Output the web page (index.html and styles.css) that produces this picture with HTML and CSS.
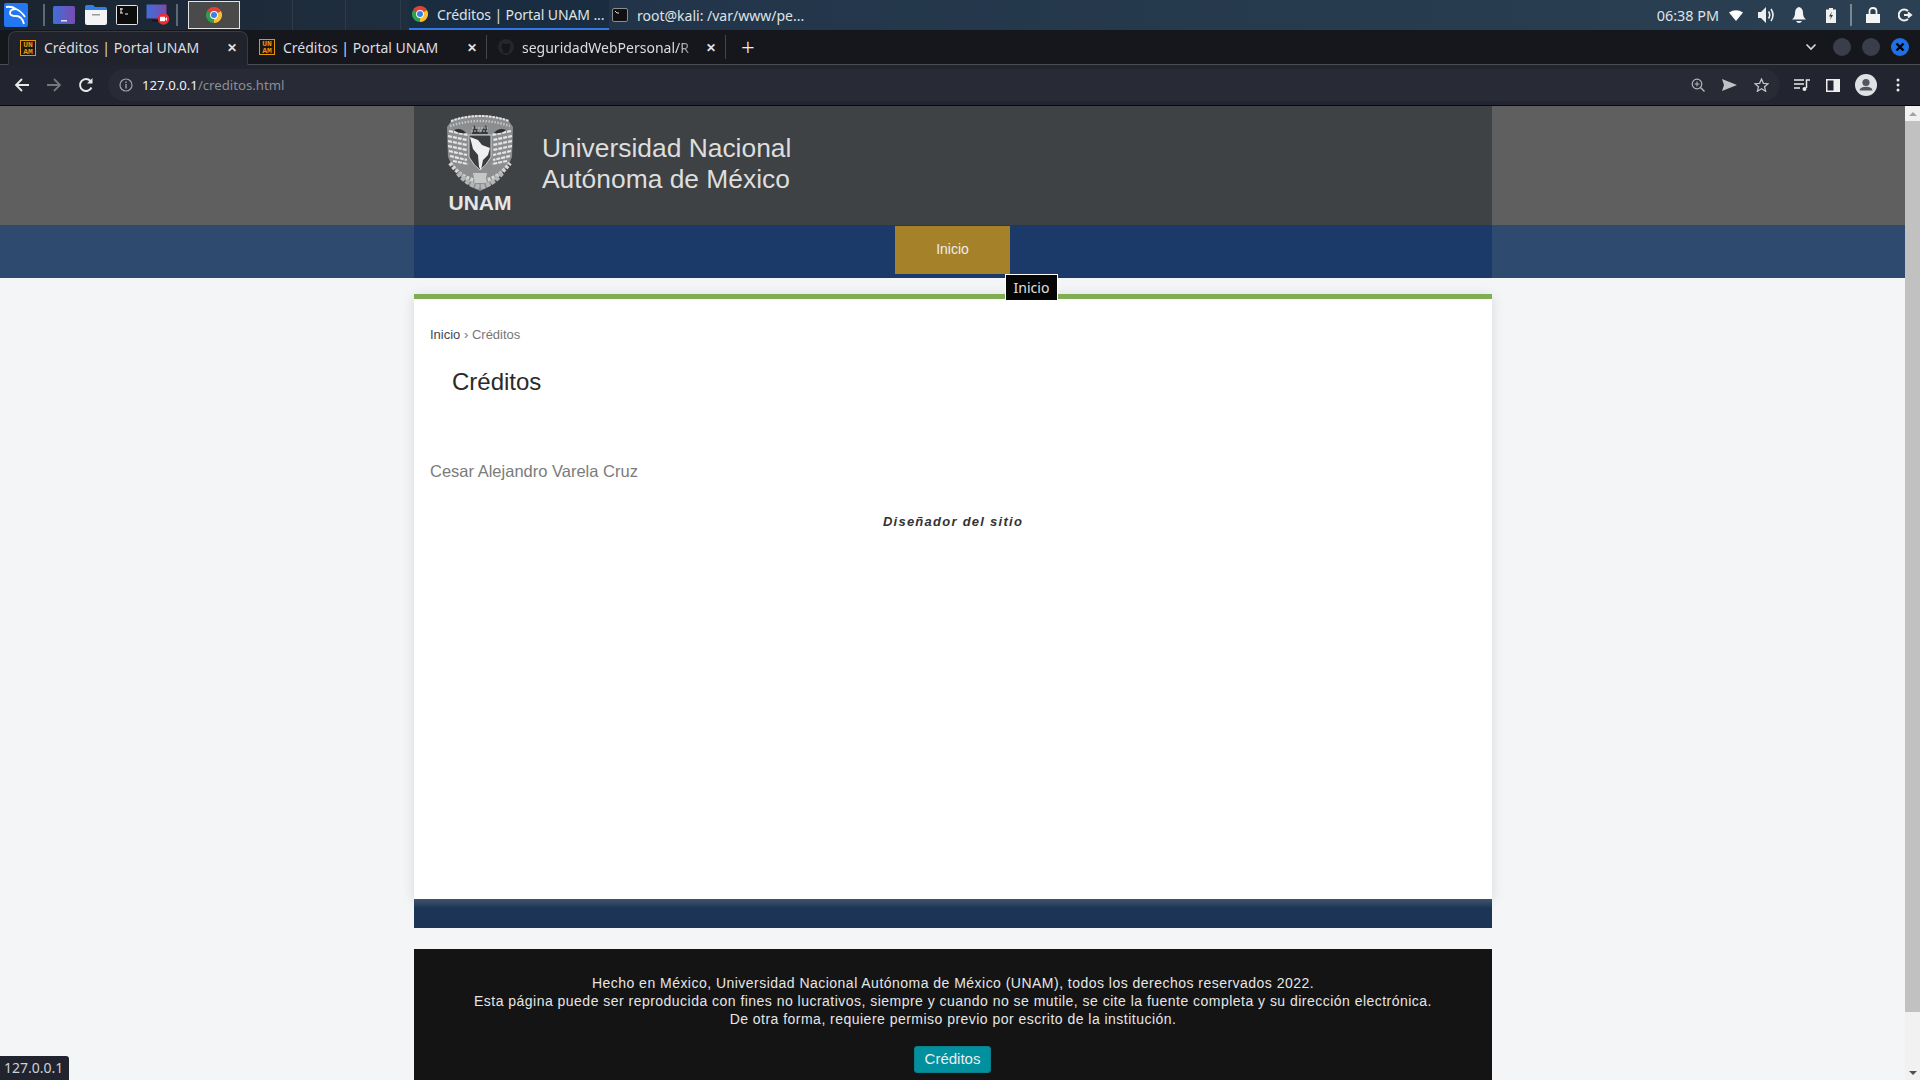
FILE: index.html
```html
<!DOCTYPE html>
<html lang="en">
<head>
  <meta charset="UTF-8">
  <meta name="viewport" content="width=device-width, initial-scale=1.0">
  <title>Créditos | Portal UNAM</title>
  <link rel="stylesheet" href="styles.css">
</head>
<body>
  <svg class="defs" width="0" height="0">
    <symbol id="chrome" viewBox="0 0 16 16">
      <path d="M8 8 L1.07 4 A8 8 0 0 1 14.93 4 Z" fill="#dc4437"/>
      <path d="M8 8 L14.93 4 A8 8 0 0 1 8 16 Z" fill="#fbc02d"/>
      <path d="M8 8 L8 16 A8 8 0 0 1 1.07 4 Z" fill="#2e9e4f"/>
      <circle cx="8" cy="8" r="3.9" fill="#fff"/>
      <circle cx="8" cy="8" r="3" fill="#3b7ee8"/>
    </symbol>
  </svg>

  <!-- Desktop panel -->
  <div class="panel">
    <svg class="kali" width="24" height="24" viewBox="0 0 24 24">
      <rect width="24" height="24" rx="2" fill="#2377f0"/>
      <path d="M2 4 Q8 3 12 6 Q6 6 6 10 Q6 13 12 13 Q18 13 20 21 M12 6 Q17 8 21 14" fill="none" stroke="#fff" stroke-width="1.8"/>
    </svg>
    <span class="panel-sep first"></span>
    <svg class="launcher apps" width="22" height="18" viewBox="0 0 22 18">
      <defs><linearGradient id="desk" x1="0" x2="1"><stop offset="0" stop-color="#3f6fd8"/><stop offset="1" stop-color="#7a4bb0"/></linearGradient></defs>
      <rect width="22" height="18" rx="1.5" fill="url(#desk)"/>
      <rect x="8" y="14" width="6" height="1.5" fill="#dfe6f5"/>
    </svg>
    <svg class="launcher" width="22" height="20" viewBox="0 0 22 20">
      <path d="M0 2 Q0 0 2 0 H8 L10 2 H20 Q22 2 22 4 V6 H0 Z" fill="#2f80e6"/>
      <path d="M0 5 H22 V18 Q22 20 20 20 H2 Q0 20 0 18 Z" fill="#f4f4f4"/>
      <rect x="7" y="9" width="8" height="1.5" fill="#9a9a9a"/>
    </svg>
    <svg class="launcher term" width="22" height="20" viewBox="0 0 22 20">
      <rect x=".5" y=".5" width="21" height="19" rx="1" fill="#0c0c0c" stroke="#e4e4e4"/>
      <path d="M4 4 H7 M5 3 V8 M4 8 H7 M9 9 H12" stroke="#eee" fill="none"/>
    </svg>
    <svg class="launcher rec" width="24" height="22" viewBox="0 0 24 22">
      <rect x="0" y="0" width="21" height="15" fill="url(#desk)" stroke="#23252c"/>
      <rect x="6" y="16" width="9" height="1.5" fill="#11141a"/>
      <circle cx="17.5" cy="15" r="5.8" fill="#ee2a35"/>
      <rect x="14" y="12.8" width="5" height="4.4" fill="#fff"/>
      <path d="M19 15 L21 13 V17 Z" fill="#fff"/>
    </svg>
    <span class="panel-sep second"></span>
    <div class="win-active"><svg width="16" height="16"><use href="#chrome"/></svg></div>
    <span class="win-slot"></span>
    <span class="win-slot"></span>
    <span class="win-slot wide"></span>
    <div class="task task-on">
      <svg width="16" height="16"><use href="#chrome"/></svg>
      <span>Créditos | Portal UNAM ...</span>
    </div>
    <div class="task">
      <svg width="16" height="16" viewBox="0 0 16 16">
        <rect x=".5" y="1.5" width="15" height="13" rx="1.5" fill="#111" stroke="#8a8d92"/>
        <path d="M3 4 L5 6 H7" stroke="#ddd" fill="none"/>
      </svg>
      <span>root@kali: /var/www/pe...</span>
    </div>
    <div class="tray">
      <span class="clock">06:38 PM</span>
      <svg class="tray-wifi" width="14" height="11" viewBox="0 0 14 11"><path d="M0 2.5 Q7 -2 14 2.5 L7 11 Z" fill="#fff"/></svg>
      <svg class="tray-vol" width="18" height="16" viewBox="0 0 18 16"><path d="M0 5 H3 L8 0 V16 L3 11 H0 Z" fill="#eee"/><path d="M10.5 4.5 Q13 8 10.5 11.5 M13 2 Q17 8 13 14" fill="none" stroke="#eee" stroke-width="1.6"/></svg>
      <svg class="tray-bell" width="14" height="16" viewBox="0 0 14 16"><path d="M7 0 Q11 1 11 6 Q11 10 14 12.5 H0 Q3 10 3 6 Q3 1 7 0 Z M4 14 H10 Q9 16 7 16 Q5 16 4 14 Z" fill="#f4f4f4"/></svg>
      <svg class="tray-batt" width="10" height="15" viewBox="0 0 10 15"><path d="M3 0 H7 V1.5 H10 V15 H0 V1.5 H3 Z" fill="#f0f0f0"/><path d="M6 3.5 L3 8.5 H5 L4 12 L7 7 H5 Z" fill="#2a3f50"/></svg>
      <span class="tray-sep"></span>
      <svg class="tray-lock" width="14" height="16" viewBox="0 0 14 16"><path d="M0 7 H14 V16 H0 Z" fill="#f4f4f4"/><path d="M3.5 7 V4.5 Q3.5 1 7 1 Q10.5 1 10.5 4.5 V7" fill="none" stroke="#f4f4f4" stroke-width="1.8"/></svg>
      <svg class="tray-out" width="15" height="14" viewBox="0 0 15 14"><path d="M10 3 A5.5 5.5 0 1 0 10 11" fill="none" stroke="#eee" stroke-width="2"/><path d="M6 7 H12 M10 4.5 L13 7 L10 9.5" fill="none" stroke="#eee" stroke-width="2"/></svg>
    </div>
  </div>

  <!-- Browser tabs -->
  <div class="tabstrip">
    <div class="tab tab-on">
      <span class="fav">UN<br>AM</span>
      <span class="tab-title">Créditos | Portal UNAM</span>
      <span class="tab-x">✕</span>
    </div>
    <div class="tab">
      <span class="fav">UN<br>AM</span>
      <span class="tab-title">Créditos | Portal UNAM</span>
      <span class="tab-x">✕</span>
    </div>
    <div class="tab tab-last">
      <svg width="16" height="16" viewBox="0 0 16 16"><circle cx="8" cy="8" r="8" fill="#24262c"/><path d="M5 14 V11 Q3 9 4 6 L4.5 4 L6.5 5 H9.5 L11.5 4 L12 6 Q13 9 11 11 V14 Z" fill="#15161a"/></svg>
      <span class="tab-title fade">seguridadWebPersonal/R</span>
      <span class="tab-x">✕</span>
    </div>
    <span class="tab-plus">+</span>
    <div class="win-controls">
      <svg class="tab-menu" width="12" height="8" viewBox="0 0 12 8"><path d="M1.5 1.5 L6 6 L10.5 1.5" fill="none" stroke="#dadada" stroke-width="1.6"/></svg>
      <span class="win-dot"></span>
      <span class="win-dot"></span>
      <span class="win-dot close">
        <svg width="10" height="10" viewBox="0 0 10 10"><path d="M1.5 1.5 L8.5 8.5 M8.5 1.5 L1.5 8.5" stroke="#000" stroke-width="2.4"/></svg>
      </span>
    </div>
  </div>

  <!-- Address bar -->
  <div class="toolbar">
    <svg class="nav-btn" width="16" height="16" viewBox="0 0 16 16"><path d="M15 8 H2 M8 2 L2 8 L8 14" fill="none" stroke="#e8e8e8" stroke-width="1.8"/></svg>
    <svg class="nav-btn" width="16" height="16" viewBox="0 0 16 16"><path d="M1 8 H14 M8 2 L14 8 L8 14" fill="none" stroke="#74767d" stroke-width="1.8"/></svg>
    <svg class="nav-btn" width="16" height="16" viewBox="0 0 16 16"><path d="M13.5 10.5 A6 6 0 1 1 12.5 4" fill="none" stroke="#e8e8e8" stroke-width="1.9"/><path d="M14.5 1 V6.5 H9 Z" fill="#e8e8e8"/></svg>
    <div class="omnibox">
      <svg width="14" height="14" viewBox="0 0 14 14"><circle cx="7" cy="7" r="6" fill="none" stroke="#a0a2a8" stroke-width="1.2"/><path d="M7 6 V10.5 M7 3.5 V5" stroke="#a0a2a8" stroke-width="1.4"/></svg>
      <span class="url"><span class="url-host">127.0.0.1</span>/creditos.html</span>
      <div class="omni-actions">
        <svg width="14" height="14" viewBox="0 0 14 14"><circle cx="6" cy="6" r="4.8" fill="none" stroke="#b4b6bb" stroke-width="1.2"/><path d="M9.5 9.5 L13.5 13.5" stroke="#b4b6bb" stroke-width="1.4"/><path d="M6 3.5 V8.5 M3.5 6 H8.5" stroke="#b4b6bb"/></svg>
        <svg width="15" height="12" viewBox="0 0 15 12"><path d="M0 0 L15 6 L0 12 L2 6 Z" fill="#c0c2c6"/></svg>
        <svg width="15" height="14" viewBox="0 0 15 14"><path d="M7.5 1 L9.4 5.3 L14 5.7 L10.5 8.7 L11.6 13.2 L7.5 10.8 L3.4 13.2 L4.5 8.7 L1 5.7 L5.6 5.3 Z" fill="none" stroke="#c0c2c6" stroke-width="1.3"/></svg>
      </div>
    </div>
    <div class="tool-icons">
      <svg width="16" height="12" viewBox="0 0 16 12"><path d="M0 1 H10 M0 5 H10 M0 9 H6" stroke="#e8e8e8" stroke-width="1.5"/><path d="M12.5 9 V1 H16 M12.5 9.5" fill="none" stroke="#e8e8e8" stroke-width="1.5"/><circle cx="10.5" cy="10" r="2" fill="#e8e8e8"/></svg>
      <svg class="side-icon" width="14" height="13" viewBox="0 0 14 13"><rect x=".75" y=".75" width="12.5" height="11.5" fill="none" stroke="#eee" stroke-width="1.5"/><rect x="7.5" y="1" width="6" height="11" fill="#eee"/></svg>
      <svg width="22" height="22" viewBox="0 0 22 22"><circle cx="11" cy="11" r="11" fill="#dfe1e5"/><circle cx="11" cy="8.5" r="3.6" fill="#53565e"/><path d="M4.5 16.5 Q5 12.8 11 12.8 Q17 12.8 17.5 16.5 Z" fill="#53565e"/></svg>
      <svg class="menu-dots" width="4" height="14" viewBox="0 0 4 14"><circle cx="2" cy="2" r="1.5" fill="#e8e8e8"/><circle cx="2" cy="7" r="1.5" fill="#e8e8e8"/><circle cx="2" cy="12" r="1.5" fill="#e8e8e8"/></svg>
    </div>
  </div>

  <div class="viewport">
    <div class="page">
      <header class="site-head">
        <div class="wrap head-inner">
          <div class="crest">
            <svg width="68" height="78" viewBox="0 0 68 78">
              <path d="M6 7 Q34 -3 62 7 L67 14 L66 44 Q62 54 56 60 Q46 74 34 78 Q22 74 12 60 Q6 54 2 44 L1 14 Z" fill="#8b8d8e"/>
              <path d="M5 8 Q34 -2 63 8" fill="none" stroke="#e4e4e4" stroke-width="2" stroke-dasharray="2.5 1"/>
              <path d="M4 13 Q34 3 64 13" fill="none" stroke="#c4c5c5" stroke-width="2.4" stroke-dasharray="1.5 1.5"/>
              <path d="M3 18 L22 22 M2 23 L21 27 M2 28 L21 32 M2 33 L21 37 M3 38 L21 42 M4 43 L21 47 M7 48 L22 51" stroke="#e6e6e6" stroke-width="2.2" stroke-dasharray="4 1"/>
              <path d="M65 18 L46 22 M66 23 L47 27 M66 28 L47 32 M66 33 L47 37 M65 38 L47 42 M64 43 L47 47 M61 48 L46 51" stroke="#e6e6e6" stroke-width="2.2" stroke-dasharray="4 1"/>
              <path d="M8 17 Q15 14 20 20 Q13 21 8 17 Z M60 17 Q53 14 48 20 Q55 21 60 17 Z" fill="#2b2f32"/>
              <path d="M28 12 L34 20 L40 12 L42 21 H26 Z" fill="#35393c"/>
              <path d="M26 15 H42 M25 18 H43" stroke="#c4c5c5" stroke-width="1.2" stroke-dasharray="2 1"/>
              <path d="M23 22 H45 V44 Q40 53 34 57 Q28 53 23 44 Z" fill="#3a3e41" stroke="#cfd0d0"/>
              <path d="M24 24 L32 27 L36 32 L44 35 L42 42 L37 47 L35 57 L33 54 L32 42 L27 36 Z" fill="#f0f0f0"/>
              <path d="M4 50 Q16 67 34 68 Q52 67 64 50" fill="none" stroke="#d4d5d5" stroke-width="4" stroke-dasharray="3 1.4"/>
              <path d="M12 60 Q22 72 34 74 Q46 72 56 60" fill="none" stroke="#b4b6b6" stroke-width="5" stroke-dasharray="4 1.5"/>
              <path d="M27 60 H41 L39 70 H29 Z" fill="#c6c7c7"/>
            </svg>
            <span class="crest-name">UNAM</span>
          </div>
          <div class="head-title">Universidad Nacional<br>Autónoma de México</div>
        </div>
      </header>

      <nav class="site-nav">
        <div class="wrap nav-inner">
          <a class="nav-item" href="#">Inicio</a>
          <span class="nav-tip">Inicio</span>
        </div>
      </nav>

      <main class="wrap card">
        <p class="crumbs"><a href="#">Inicio</a> › Créditos</p>
        <h1 class="card-title">Créditos</h1>
        <p class="person">Cesar Alejandro Varela Cruz</p>
        <p class="role">Diseñador del sitio</p>
      </main>

      <div class="wrap card-foot"></div>

      <footer class="wrap legal">
        <p>Hecho en México, Universidad Nacional Autónoma de México (UNAM), todos los derechos reservados 2022.<br>
        Esta página puede ser reproducida con fines no lucrativos, siempre y cuando no se mutile, se cite la fuente completa y su dirección electrónica.<br>
        De otra forma, requiere permiso previo por escrito de la institución.</p>
        <a class="legal-btn" href="#">Créditos</a>
      </footer>
    </div>

    <div class="scrollbar">
      <span class="arrow up"></span>
      <span class="thumb"></span>
      <span class="arrow down"></span>
    </div>

    <div class="status">127.0.0.1</div>
  </div>
</body>
</html>
```

FILE: styles.css
```css
html, body {
  height: 100%;
  margin: 0;
}

body {
  display: flex;
  flex-direction: column;
  overflow: hidden;
  background-color: #f4f5f7;
  font-family: "Liberation Sans", Arial, sans-serif;
}

.defs {
  position: absolute;
}

/* desktop panel */
.panel {
  display: flex;
  align-items: center;
  flex: 0 0 30px;
  height: 30px;
  background: linear-gradient(90deg, #1a2430, #22354a 35%, #2b4052);
  color: #dfe3e6;
  font-family: "Noto Sans", sans-serif;
  font-size: 14px;
}

.kali {
  margin-left: 4px;
}

.panel-sep {
  width: 2px;
  height: 22px;
  background-color: #5d6a76;
}

.panel-sep.first {
  margin: 0 8px 0 15px;
}

.panel-sep.second {
  margin: 0 10px 0 6px;
}

.launcher {
  margin-right: 9px;
}

.launcher.apps {
  margin-right: 10px;
}

.launcher.term {
  margin-right: 8px;
}

.launcher.rec {
  margin-right: 0;
}

.win-active {
  display: flex;
  align-items: center;
  justify-content: center;
  box-sizing: border-box;
  width: 52px;
  height: 28px;
  background-color: #4a4a4a;
  border: 1px solid #e4e4e4;
}

.win-slot {
  box-sizing: border-box;
  width: 53px;
  height: 30px;
  border-right: 1px solid #2e3c4a;
}

.win-slot.wide {
  width: 55px;
  margin-right: 8px;
}

.task {
  display: flex;
  align-items: center;
  gap: 9px;
  box-sizing: border-box;
  width: 200px;
  height: 30px;
  padding-left: 3px;
  white-space: nowrap;
}

.task svg {
  flex: none;
}

.task-on {
  gap: 9px;
  padding-left: 3px;
  background-color: #1a2d40;
  border-bottom: 2px solid #2f7ae8;
  letter-spacing: -.1px;
}

.tray {
  display: flex;
  align-items: center;
  margin-left: auto;
  padding-right: 7px;
}

.clock {
  margin-right: 10px;
  font-size: 14.4px;
}

.tray-vol {
  margin-left: 15px;
}

.tray-bell {
  margin-left: 16px;
}

.tray-batt {
  margin-left: 20px;
}

.tray-sep {
  width: 2px;
  height: 22px;
  margin: 0 14px 0 14px;
  background-color: #7a8791;
}

.tray-out {
  margin-left: 18px;
}

/* browser tabs */
.tabstrip {
  display: flex;
  align-items: center;
  flex: 0 0 35px;
  box-sizing: border-box;
  height: 35px;
  padding-left: 8px;
  background-color: #16171c;
  border-bottom: 1px solid #4c4d52;
  color: #dcdde0;
  font-family: "Noto Sans", sans-serif;
  font-size: 14px;
}

.tab {
  display: flex;
  align-items: center;
  box-sizing: border-box;
  width: 239px;
  height: 24px;
  padding: 0 7px 0 11px;
  border-right: 1px solid #44454b;
}

.tab svg {
  flex: none;
}

.tab-on {
  align-self: flex-start;
  width: 240px;
  height: 34px;
  margin-top: 1px;
  padding: 0 8px 2px 11px;
  background-color: #20222c;
  border: 1px solid #3a3b42;
  border-bottom: none;
  border-radius: 8px 8px 0 0;
}

.fav {
  flex: none;
  box-sizing: border-box;
  width: 16px;
  height: 16px;
  background-color: #1c1712;
  border: 1px solid #e8930c;
  color: #e8930c;
  font-family: "Liberation Mono", monospace;
  font-size: 8px;
  font-weight: bold;
  line-height: 7px;
  text-align: center;
}

.tab-title {
  flex: 1;
  overflow: hidden;
  margin-left: 8px;
  white-space: nowrap;
}

.tab-title.fade {
  -webkit-mask-image: linear-gradient(90deg, #000 85%, transparent);
  mask-image: linear-gradient(90deg, #000 85%, transparent);
}

.tab-x {
  flex: none;
  width: 14px;
  margin-right: 0;
  font-size: 12px;
  font-weight: bold;
  text-align: center;
  color: #e4e4e4;
}

.tab-plus {
  margin-left: 15px;
  font-size: 24px;
  font-weight: 300;
  line-height: 24px;
  color: #f0f0f0;
}

.win-controls {
  display: flex;
  align-items: center;
  gap: 11px;
  margin-left: auto;
  padding-right: 11px;
}

.tab-menu {
  margin-right: 5px;
}

.win-dot {
  display: flex;
  align-items: center;
  justify-content: center;
  width: 18px;
  height: 18px;
  border-radius: 50%;
  background-color: #3a3e4b;
}

.win-dot.close {
  background-color: #1f6fe5;
}

/* address bar */
.toolbar {
  display: flex;
  align-items: center;
  flex: 0 0 41px;
  box-sizing: border-box;
  height: 41px;
  padding-left: 14px;
  background-color: #22242f;
  border-bottom: 1px solid #08090c;
}

.nav-btn {
  margin-right: 16px;
}

.omnibox {
  display: flex;
  align-items: center;
  flex: 0 0 1672px;
  box-sizing: border-box;
  height: 32px;
  margin-left: -2px;
  padding: 0 11px 0 11px;
  background-color: #282a36;
  border-radius: 16px;
}

.url {
  margin-left: 9px;
  font-family: "Noto Sans", sans-serif;
  font-size: 13.2px;
  color: #8c8e96;
}

.url-host {
  color: #eef0f3;
}

.omni-actions {
  display: flex;
  align-items: center;
  gap: 17px;
  margin-left: auto;
}

.tool-icons {
  display: flex;
  align-items: center;
  margin-left: 14px;
}

.tool-icons svg {
  margin-right: 16px;
}

.tool-icons .side-icon {
  margin-right: 15px;
}

.tool-icons .menu-dots {
  margin: 0 0 0 3px;
}

/* page */
.viewport {
  position: relative;
  display: flex;
  flex: 1;
  min-height: 0;
}

.page {
  flex: 1;
  overflow: hidden;
  background-color: #f4f5f7;
}

.wrap {
  box-sizing: border-box;
  width: 1078px;
  margin-left: 414px;
}

.site-head {
  height: 119px;
  background-color: #5f5f5f;
}

.head-inner {
  display: flex;
  height: 119px;
  padding-left: 32px;
  background-color: #3e4245;
  color: #dedede;
}

.crest {
  display: flex;
  flex-direction: column;
  align-items: center;
  width: 68px;
  padding-top: 7px;
}

.crest svg {
  display: block;
}

.crest-name {
  margin-top: 1px;
  font-size: 21px;
  font-weight: bold;
  line-height: 22px;
  color: #e6e6e6;
}

.head-title {
  margin: 27px 0 0 28px;
  font-size: 26.4px;
  line-height: 31px;
  white-space: nowrap;
}

.site-nav {
  height: 53px;
  background-color: #2e4a6e;
}

.nav-inner {
  position: relative;
  height: 53px;
  padding: 1px 0 0 481px;
  background-color: #1c3a69;
}

.nav-item {
  display: block;
  width: 115px;
  height: 48px;
  background-color: #a5822a;
  color: #eee;
  font-size: 14px;
  line-height: 46px;
  text-align: center;
  text-decoration: none;
}

.nav-tip {
  position: absolute;
  top: 49px;
  left: 591px;
  box-sizing: border-box;
  width: 53px;
  height: 27px;
  background-color: #050505;
  border: 1px solid #fff;
  color: #e0e0e0;
  font-family: "Noto Sans", sans-serif;
  font-size: 14px;
  line-height: 26px;
  text-align: center;
  z-index: 2;
}

.card {
  height: 605px;
  margin-top: 16px;
  padding: 27px 16px 0;
  background-color: #fff;
  border-top: 5px solid #7fad53;
  box-shadow: 0 2px 12px rgba(0, 0, 0, 0.12);
}

.crumbs {
  margin: 0;
  font-size: 13px;
  line-height: 18px;
  color: #777;
}

.crumbs a {
  color: #3f4654;
  text-decoration: none;
}

.card-title {
  margin: 22px 0 0 22px;
  font-size: 24px;
  font-weight: normal;
  line-height: 32px;
  color: #2a2a2a;
}

.person {
  margin: 61px 0 0;
  font-size: 16.5px;
  line-height: 24px;
  color: #7b7b7b;
}

.role {
  margin: 30px 0 0;
  font-size: 13px;
  font-style: italic;
  font-weight: bold;
  letter-spacing: 1.26px;
  line-height: 18px;
  text-align: center;
  color: #333;
}

.card-foot {
  position: relative;
  height: 29px;
  background: linear-gradient(#40546c, #1c3557 9px);
}

.legal {
  height: 140px;
  margin-top: 21px;
  padding-top: 25px;
  background-color: #141414;
  color: #e6e6e6;
  font-size: 14px;
  text-align: center;
}

.legal p {
  margin: 0;
  letter-spacing: .475px;
  line-height: 18px;
}

.legal-btn {
  display: block;
  box-sizing: border-box;
  width: 77px;
  height: 27px;
  margin: 18px 0 0 500px;
  background-color: #00909e;
  border: 1px solid #0a7f8b;
  border-radius: 3px;
  color: #eee;
  font-size: 15px;
  line-height: 24px;
  text-decoration: none;
}

.scrollbar {
  display: flex;
  flex-direction: column;
  align-items: center;
  flex: 0 0 15px;
  background-color: #f1f1f1;
}

.arrow {
  flex: none;
  width: 0;
  height: 0;
  border-left: 4px solid transparent;
  border-right: 4px solid transparent;
}

.arrow.up {
  margin-top: 6px;
  border-bottom: 4px solid #a3a3a3;
}

.thumb {
  flex: none;
  width: 15px;
  height: 891px;
  margin-top: 5px;
  background-color: #c1c1c1;
}

.arrow.down {
  margin-top: auto;
  margin-bottom: 5px;
  border-top: 4px solid #505050;
}

.status {
  position: absolute;
  left: 0;
  bottom: 0;
  box-sizing: border-box;
  width: 69px;
  height: 24px;
  padding-left: 4px;
  background-color: #21242e;
  border-radius: 0 3px 0 0;
  color: #cfd0d4;
  font-family: "Noto Sans", sans-serif;
  font-size: 14px;
  line-height: 24px;
}
```
